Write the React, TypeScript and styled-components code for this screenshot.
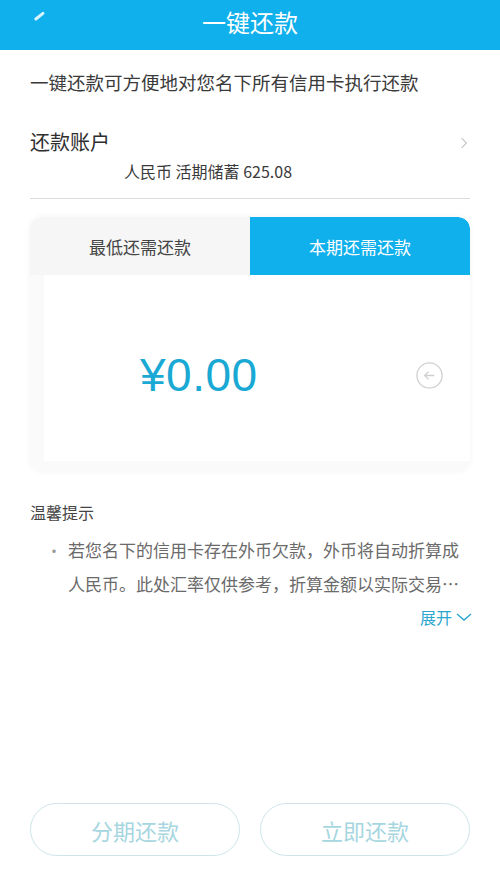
import React from "react";
import styled, { createGlobalStyle } from "styled-components";

const GlobalStyle = createGlobalStyle`
  html, body {
    margin: 0;
    padding: 0;
    background: #fff;
    font-family: "Noto Sans CJK SC", "Liberation Sans", sans-serif;
  }
`;

const tipLines = [
  "若您名下的信用卡存在外币欠款，外币将自动折算成",
  "人民币。此处汇率仅供参考，折算金额以实际交易…",
];

const App = () => {
  return (
    <Page>
      <GlobalStyle />
      <Header>
        <Slash />
        <Title>一键还款</Title>
      </Header>

      <Body>
        <Intro>一键还款可方便地对您名下所有信用卡执行还款</Intro>

        <AccountRow>
          <AccountLabel>还款账户</AccountLabel>
          <AccountValue>人民币 活期储蓄 625.08</AccountValue>
          <Chevron viewBox="0 0 10 16">
            <path d="M2 2 L8 8 L2 14" fill="none" stroke="#c4c4c4" strokeWidth="1.4" />
          </Chevron>
        </AccountRow>

        <Card>
          <Tabs>
            <Tab>最低还需还款</Tab>
            <Tab $active>本期还需还款</Tab>
          </Tabs>
          <AmountArea>
            <Amount>¥0.00</Amount>
            <BackIcon viewBox="0 0 30 30">
              <circle cx="15" cy="15" r="13" fill="none" stroke="#cfcfcf" strokeWidth="1.3" />
              <path d="M20 15 H10 M14 11 L10 15 L14 19" fill="none" stroke="#cfcfcf" strokeWidth="1.3" />
            </BackIcon>
          </AmountArea>
        </Card>

        <TipsTitle>温馨提示</TipsTitle>
        <TipItem>
          <Dot>·</Dot>
          <TipText>
            {tipLines.map((line) => (
              <TipLine key={line}>{line}</TipLine>
            ))}
          </TipText>
        </TipItem>
        <Expand>
          展开
          <svg width="16" height="10" viewBox="0 0 16 10">
            <path d="M1 2 L8 8 L15 2" fill="none" stroke="#2aa6cf" strokeWidth="1.4" />
          </svg>
        </Expand>
      </Body>

      <Footer>
        <OutlineButton>分期还款</OutlineButton>
        <OutlineButton>立即还款</OutlineButton>
      </Footer>
    </Page>
  );
};

export default App;

const Page = styled.div`
  width: 500px;
  height: 896px;
  display: flex;
  flex-direction: column;
  background: #fff;
  overflow: hidden;
`;

const Header = styled.div`
  height: 50px;
  background: #10b0ec;
  display: flex;
  align-items: center;
  justify-content: center;
  position: relative;
`;

const Slash = styled.span`
  position: absolute;
  left: 38px;
  top: 10px;
  width: 2.5px;
  height: 12px;
  background: rgba(255, 255, 255, 0.85);
  border-radius: 2px;
  transform: rotate(52deg);
`;

const Title = styled.div`
  color: #fff;
  font-size: 24px;
  line-height: 1;
  margin-top: -6px;
`;

const Body = styled.div`
  flex: 1;
  padding: 0 30px;
  display: flex;
  flex-direction: column;
`;

const Intro = styled.div`
  margin-top: 20px;
  font-size: 18.5px;
  line-height: 24px;
  color: #3a3a3a;
`;

const AccountRow = styled.div`
  margin-top: 30px;
  height: 74px;
  border-bottom: 1px solid #dcdcdc;
  display: grid;
  grid-template-columns: 1fr 14px;
  grid-template-rows: auto auto;
`;

const AccountLabel = styled.div`
  font-size: 20px;
  line-height: 28px;
  color: #2e2e2e;
  padding-top: 4px;
`;

const AccountValue = styled.div`
  grid-column: 1;
  grid-row: 2;
  padding-left: 94px;
  font-size: 16px;
  line-height: 20px;
  color: #3a3a3a;
  margin-top: -12px;
`;

const Chevron = styled.svg`
  grid-column: 2;
  grid-row: 1;
  width: 8px;
  height: 14px;
  margin-top: 12px;
  justify-self: end;
  margin-right: 2px;
`;

const Card = styled.div`
  margin-top: 18px;
  height: 254px;
  border-radius: 12px;
  background: #fff;
  box-shadow: 0 0 6px rgba(0, 0, 0, 0.05);
  display: flex;
  flex-direction: column;
  overflow: hidden;
`;

const Tabs = styled.div`
  display: grid;
  grid-template-columns: 1fr 1fr;
  height: 58px;
`;

const Tab = styled.div<{ $active?: boolean }>`
  display: flex;
  align-items: center;
  justify-content: center;
  font-size: 17px;
  color: ${(p) => (p.$active ? "#fff" : "#444")};
  background: ${(p) => (p.$active ? "#10b0ec" : "#f6f6f6")};
  border-top-right-radius: ${(p) => (p.$active ? "12px" : "0")};
  border-top-left-radius: ${(p) => (p.$active ? "0" : "12px")};
`;

const AmountArea = styled.div`
  flex: 1;
  display: flex;
  align-items: center;
  justify-content: space-between;
  padding: 0 26px 0 96px;
  border-left: 14px solid #fafafa;
  border-bottom: 10px solid #fafafa;
`;

const Amount = styled.div`
  font-family: "Liberation Sans", "Noto Sans", sans-serif;
  font-size: 46px;
  color: #19a9d4;
  letter-spacing: 0.5px;
  margin-top: 14px;
`;

const BackIcon = styled.svg`
  width: 29px;
  height: 29px;
  margin-top: 14px;
`;

const TipsTitle = styled.div`
  margin-top: 30px;
  font-size: 16px;
  line-height: 22px;
  color: #444;
`;

const TipItem = styled.div`
  display: flex;
  margin-top: 10px;
`;

const Dot = styled.div`
  width: 38px;
  padding-left: 16px;
  box-sizing: border-box;
  color: #999;
  font-size: 16px;
  line-height: 34px;
`;

const TipText = styled.div`
  flex: 1;
  display: flex;
  flex-direction: column;
`;

const TipLine = styled.div`
  font-size: 17px;
  line-height: 34px;
  color: #6a6a6a;
  white-space: nowrap;
`;

const Expand = styled.div`
  align-self: flex-end;
  display: flex;
  align-items: center;
  gap: 4px;
  margin-top: 4px;
  margin-right: -2px;
  font-size: 16px;
  line-height: 24px;
  color: #2aa6cf;
`;

const Footer = styled.div`
  display: grid;
  grid-template-columns: 1fr 1fr;
  gap: 20px;
  padding: 0 30px 40px;
`;

const OutlineButton = styled.button`
  height: 53px;
  border-radius: 27px;
  border: 1.5px solid #cfe5ea;
  background: #fff;
  color: #a6d6df;
  font-family: "Noto Sans CJK SC", sans-serif;
  font-size: 22px;
`;
